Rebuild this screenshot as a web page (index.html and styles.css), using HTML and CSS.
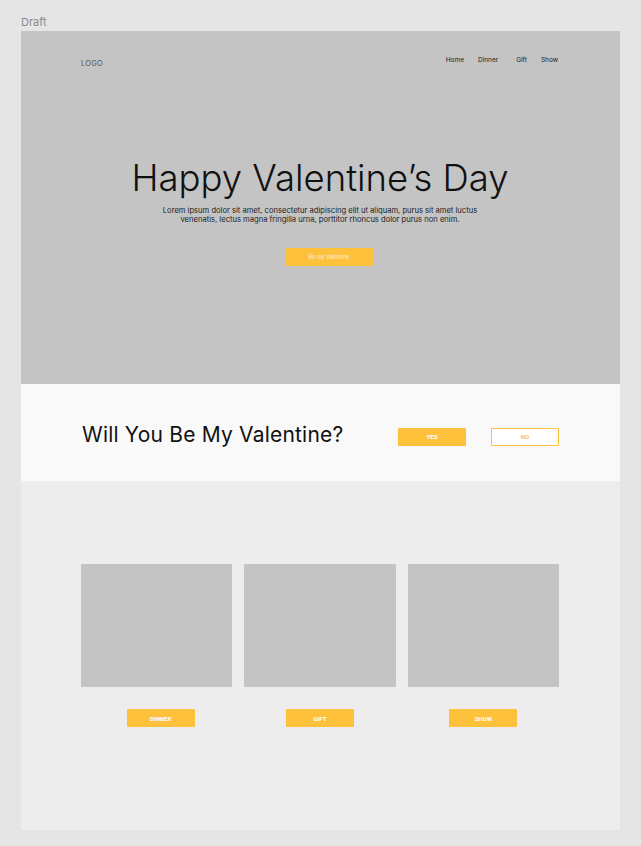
FILE: index.html
```html
<!DOCTYPE html>
<html>
<head>
<meta charset="utf-8">
<link rel="stylesheet" href="styles.css">
</head>
<body>
<div class="draft">Draft</div>
<main class="frame">
  <section class="hero">
    <header class="topbar">
      <div class="logo">LOGO</div>
      <nav class="nav">
        <span class="nav-home">Home</span>
        <span class="nav-dinner">Dinner</span>
        <span class="nav-gift">Gift</span>
        <span class="nav-show">Show</span>
      </nav>
    </header>
    <h1 class="title">Happy Valentine’s Day</h1>
    <p class="lead">Lorem ipsum dolor sit amet, consectetur adipiscing elit ut aliquam, purus sit amet luctus venenatis, lectus magna fringilla urna, porttitor rhoncus dolor purus non enim.</p>
    <div class="btn btn-hero">Be my Valentine</div>
  </section>
  <section class="ask">
    <h2 class="ask-title">Will You Be My Valentine?</h2>
    <div class="ask-btns">
      <div class="btn btn-yes">YES</div>
      <div class="btn btn-no">NO</div>
    </div>
  </section>
  <section class="cards">
    <div class="card">
      <div class="card-img"></div>
      <div class="btn btn-card btn-card-first">DINNER</div>
    </div>
    <div class="card">
      <div class="card-img"></div>
      <div class="btn btn-card">GIFT</div>
    </div>
    <div class="card">
      <div class="card-img"></div>
      <div class="btn btn-card">SHOW</div>
    </div>
  </section>
</main>
</body>
</html>
```
FILE: styles.css
```css
* { box-sizing: border-box; margin: 0; padding: 0; }
body {
  background: #e5e5e5;
  width: 641px;
  height: 846px;
  overflow: hidden;
  font-family: "Inter", "Noto Sans", sans-serif;
}
.draft {
  font-family: "Inter", sans-serif;
  font-size: 11px;
  color: #8a8a8a;
  padding: 15px 0 0 21px;
  height: 31px;
}
.frame {
  margin-left: 21px;
  width: 599px;
  height: 799px;
  display: flex;
  flex-direction: column;
}
.hero {
  background: #c4c4c4;
  height: 353px;
  padding: 0 61px 0 60px;
  display: flex;
  flex-direction: column;
  align-items: center;
}
.topbar {
  width: 100%;
  display: flex;
  justify-content: space-between;
  align-items: flex-start;
  padding-top: 25px;
}
.logo {
  font-size: 7.5px;
  color: #555;
  letter-spacing: 0.2px;
  margin-top: 3px;
}
.nav {
  display: flex;
  font-size: 6.5px;
  color: #222;
  padding-right: 1px;
}
.nav-dinner { margin-left: 14px; }
.nav-gift { margin-left: 18px; }
.nav-show { margin-left: 14px; }
.title {
  font-weight: 300;
  font-size: 36.5px;
  color: #111;
  margin-top: 88px;
  line-height: 44px;
  letter-spacing: 0;
}
.lead {
  width: 340px;
  text-align: center;
  font-size: 7.6px;
  line-height: 8.6px;
  color: #222;
  margin-top: 7px;
}
.btn {
  display: flex;
  align-items: center;
  justify-content: center;
  background: #fec13c;
  color: #fff;
  border-radius: 1px;
}
.btn-hero {
  width: 87px;
  height: 18px;
  font-size: 5.5px;
  font-weight: 300;
  margin-top: 24px;
  margin-left: 18px;
}
.ask {
  background: #f9f9f9;
  height: 97px;
  padding: 0 61px 0 61px;
  display: flex;
  align-items: center;
  justify-content: space-between;
}
.ask-title {
  font-weight: 400;
  font-size: 21px;
  letter-spacing: 0.2px;
  color: #111;
  margin-top: 4px;
}
.ask-btns {
  display: flex;
  gap: 25px;
  margin-top: 8px;
}
.btn-yes, .btn-no {
  width: 68px;
  height: 18px;
  font-size: 6px;
  font-weight: 700;
  font-family: "Roboto", sans-serif;
}
.btn-no {
  background: #fff;
  color: #fec13c;
  border: 1px solid #fec13c;
}
.cards {
  background: #ededed;
  flex: 1;
  padding: 83px 61px 0 60px;
  display: flex;
  gap: 12px;
}
.card {
  flex: 1;
  display: flex;
  flex-direction: column;
  align-items: center;
}
.card-img {
  width: 100%;
  height: 123px;
  background: #c4c4c4;
}
.btn-card {
  width: 68px;
  height: 18px;
  margin-top: 22px;
  font-size: 6px;
  font-weight: 700;
  font-family: "Roboto", sans-serif;
}
.btn-card-first { margin-left: 8px; }
```
